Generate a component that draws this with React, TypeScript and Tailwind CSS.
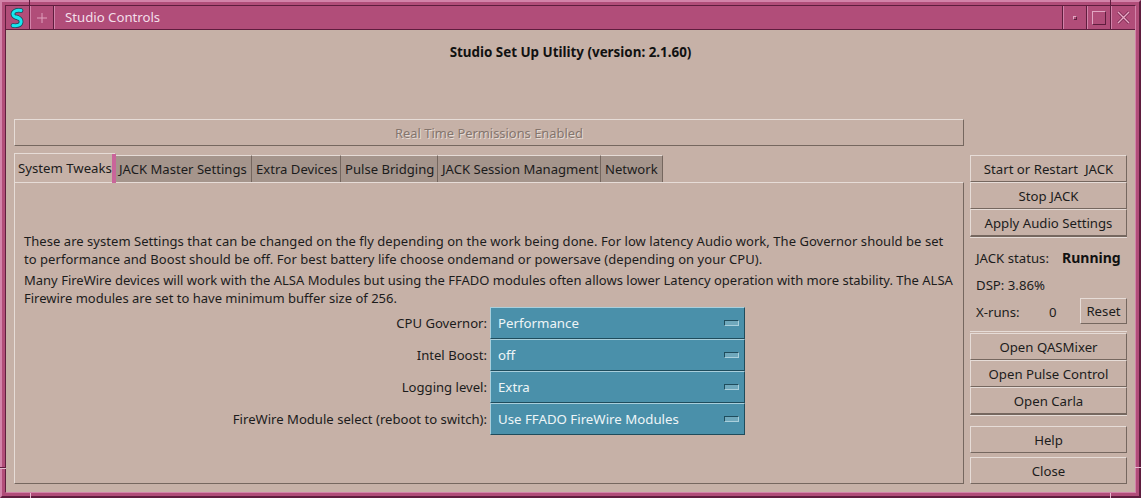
const font = "[font-family:'Noto_Sans',sans-serif]";

const Btn = ({ label, className = '' }: { label: string; className?: string }) => (
  <button
    type="button"
    className={`flex items-center justify-center whitespace-pre border border-t-[#e6dcd7] border-l-[#e6dcd7] border-r-[#75675f] border-b-[#75675f] pt-[2px] text-[13.2px] text-[#1c1c1c] ${className}`}
  >
    {label}
  </button>
);

const tabs = [
  { label: 'JACK Master Settings', width: 'w-[137px]' },
  { label: 'Extra Devices', width: 'w-[89px]' },
  { label: 'Pulse Bridging', width: 'w-[97px]' },
  { label: 'JACK Session Managment', width: 'w-[163px]' },
  { label: 'Network', width: 'w-[62px]' },
];

const combos = [
  { label: 'CPU Governor:', value: 'Performance' },
  { label: 'Intel Boost:', value: 'off' },
  { label: 'Logging level:', value: 'Extra' },
  { label: 'FireWire Module select (reboot to switch):', value: 'Use FFADO FireWire Modules' },
];

const Combo = ({ label, value }: { label: string; value: string }) => (
  <div className="flex items-center">
    <span className="w-[462px] pt-[2px] pr-[3px] text-right text-[13.1px] text-[#1c1c1c]">{label}</span>
    <div className="flex h-[32px] w-[255px] items-center justify-between border border-t-[#a9cfdc] border-l-[#a9cfdc] border-r-[#1f4c5c] border-b-[#1f4c5c] bg-[#4a90aa] pl-[7px] pr-[5px] text-[13.25px] text-[#eef5f7]">
      <span className="pt-[2px]">{value}</span>
      <span className="h-[6px] w-[15px] border border-t-[#1f4c5c] border-l-[#1f4c5c] border-r-[#a9cfdc] border-b-[#a9cfdc] bg-[#6fa8bc]" />
    </div>
  </div>
);

const App = () => {
  return (
    <div className={`relative h-[498px] w-[1141px] overflow-hidden ${font}`}>
      <div className="h-full border-2 border-t-[#d283a9] border-l-[#d283a9] border-r-[#5f1d3e] border-b-[#5f1d3e] bg-[#b14d79] p-[3px]">
        <div className="flex h-full flex-col border border-t-[#5f1d3e] border-l-[#5f1d3e] border-r-[#d283a9] border-b-[#d283a9] bg-[#c6b1a7]">
          {/* title bar */}
          <div className="flex h-[24px] shrink-0 border-b border-[#5f1d3e] bg-[#b14d79]">
            <div className="flex w-[24px] items-center justify-center border-r border-[#5f1d3e] pt-[1px] pr-[1px]">
              <svg width="14" height="20" viewBox="0 0 14 20">
                <g fill="none" strokeLinecap="round">
                  <path d="M11 2.500C6.500 1.500 2.500 3.500 3 6.500 3.500 9 6.500 9.500 8 10" stroke="#1d4a5c" strokeWidth="4.600" />
                  <path d="M6.500 9C9.500 10 11.500 12 11 14.500 10.500 17 7 18 3 17.500" stroke="#1d4a5c" strokeWidth="4.600" />
                  <path d="M11 2.500C6.500 1.500 2.500 3.500 3 6.500 3.500 9 6.500 9.500 8 10" stroke="#17e8f0" strokeWidth="3" />
                  <path d="M6.500 9C9.500 10 11.500 12 11 14.500 10.500 17 7 18 3 17.500" stroke="#17e8f0" strokeWidth="3" />
                </g>
              </svg>
            </div>
            <div className="flex w-[24px] items-center justify-center border-x border-l-[#d283a9] border-r-[#5f1d3e]">
              <svg width="10" height="10" viewBox="0 0 10 10">
                <path d="M5 0V10M0 5H10" stroke="#dfa0bd" strokeWidth="1" />
              </svg>
            </div>
            <div className="flex flex-1 items-center border-x border-l-[#d283a9] border-r-[#5f1d3e] pl-[10px] text-[13.2px] text-[#f3dfe9]">
              Studio Controls
            </div>
            <div className="flex w-[24px] items-center justify-center border-x border-l-[#d283a9] border-r-[#5f1d3e]">
              <span className="h-[4px] w-[4px] border border-t-[#e2a6c2] border-l-[#e2a6c2] border-r-[#5f1d3e] border-b-[#5f1d3e]" />
            </div>
            <div className="flex w-[24px] items-center justify-center border-x border-l-[#d283a9] border-r-[#5f1d3e]">
              <span className="h-[14px] w-[14px] border border-t-[#e2a6c2] border-l-[#e2a6c2] border-r-[#5f1d3e] border-b-[#5f1d3e]" />
            </div>
            <div className="flex w-[24px] items-center justify-center border-l border-l-[#d283a9]">
              <svg width="13" height="13" viewBox="0 0 13 13">
                <path d="M1 1L12 12M12 1L1 12" stroke="#7d2b53" strokeWidth="3" />
                <path d="M1 1L12 12M12 1L1 12" stroke="#e9a9c6" strokeWidth="1.400" />
              </svg>
            </div>
          </div>

          {/* window body */}
          <div className="flex flex-1 flex-col px-[8px]">
            <h1 className="mt-[13px] text-center text-[13.4px] leading-[18px] font-bold text-[#111]">
              Studio Set Up Utility (version: 2.1.60)
            </h1>

            <div className="mt-[58px] flex">
              <div className="w-[950px]">
                <div className="flex h-[27px] items-center justify-center border border-t-[#e6dcd7] border-l-[#e6dcd7] border-r-[#75675f] border-b-[#75675f] pt-[2px] text-[12.9px] text-[#84756d] [text-shadow:1px_1px_0_#e6dcd7]">
                  Real Time Permissions Enabled
                </div>

                <div className="mt-[7px] flex h-[29px] items-end">
                  <div className="relative z-10 -mb-px flex h-[30px] w-[101px] items-center border-t border-l border-[#e6dcd7] pl-[3px] text-[13.2px] text-[#1c1c1c]">
                    System Tweaks
                    <span className="absolute top-0 -right-px h-[29px] w-[4px] bg-[#c9659a]" />
                  </div>
                  {tabs.map(tab => (
                    <div
                      key={tab.label}
                      className={`flex h-[27px] items-center border-t border-r border-t-[#e6dcd7] border-r-[#75675f] bg-[#a5958c] pt-[2px] pl-[4px] text-[13.1px] whitespace-nowrap text-[#1c1c1c] ${tab.width}`}
                    >
                      {tab.label}
                    </div>
                  ))}
                </div>

                <div className="h-[302px] border border-t-[#e6dcd7] border-l-[#e6dcd7] border-r-[#75675f] border-b-[#75675f] pt-[49px]">
                  <p className="pl-[9px] text-[13px] leading-[18px] tracking-[0.045px] whitespace-nowrap text-[#1c1c1c]">
                    These are system Settings that can be changed on the fly depending on the work being done. For low latency Audio work, The Governor should be set
                    <br />
                    to performance and Boost should be off. For best battery life choose ondemand or powersave (depending on your CPU).
                  </p>
                  <p className="mt-[3px] pl-[9px] text-[13px] leading-[18px] whitespace-nowrap text-[#1c1c1c]">
                    Many FireWire devices will work with the ALSA Modules but using the FFADO modules often allows lower Latency operation with more stability. The ALSA
                    <br />
                    Firewire modules are set to have minimum buffer size of 256.
                  </p>
                  <div className="pl-[13px]">
                    {combos.map(combo => (
                      <Combo key={combo.label} label={combo.label} value={combo.value} />
                    ))}
                  </div>
                </div>
              </div>

              <div className="ml-[6px] flex w-[157px] flex-col pt-[36px]">
                <Btn label="Start or Restart  JACK" className="h-[27px]" />
                <Btn label="Stop JACK" className="h-[27px]" />
                <Btn label="Apply Audio Settings" className="h-[28px] border-b-2" />
                <div className="h-px bg-[#e6dcd7]" />

                <div className="mt-[12px] flex h-[18px] items-center pl-[6px] text-[13.2px] text-[#1c1c1c]">
                  <span className="w-[86px]">JACK status:</span>
                  <span className="mb-[4px] text-[14px] font-bold text-[#111]">Running</span>
                </div>
                <div className="mt-[9px] flex h-[18px] items-center pl-[6px] text-[13.2px] text-[#1c1c1c]">DSP: 3.86%</div>
                <div className="mt-[3px] flex items-center pl-[6px] text-[13.2px] text-[#1c1c1c]">
                  <span className="w-[73px] pt-[4px]">X-runs:</span>
                  <span className="w-[31px] pt-[4px]">0</span>
                  <Btn label="Reset" className="h-[26px] w-[47px]" />
                </div>

                <div className="mt-[7px] h-px bg-[#e6dcd7]" />
                <Btn label="Open QASMixer" className="mt-px h-[27px]" />
                <Btn label="Open Pulse Control" className="h-[27px]" />
                <Btn label="Open Carla" className="h-[28px] border-b-2" />
                <div className="h-px bg-[#e6dcd7]" />

                <Btn label="Help" className="mt-[10px] h-[27px]" />
                <Btn label="Close" className="mt-[4px] h-[27px]" />
              </div>
            </div>
          </div>
        </div>
      </div>

      {/* frame grip ticks */}
      <span className="absolute top-0 left-[29px] h-[6px] w-px bg-[#5f1d3e]" />
      <span className="absolute top-0 left-[1110px] h-[6px] w-px bg-[#5f1d3e]" />
      <span className="absolute bottom-0 left-[30px] h-[5px] w-px bg-[#e6b9cf]" />
      <span className="absolute bottom-0 left-[1110px] h-[5px] w-px bg-[#e6b9cf]" />
      <span className="absolute top-[467px] left-0 h-px w-[6px] bg-[#5f1d3e]" />
      <span className="absolute top-[468px] left-0 h-px w-[6px] bg-[#e6b9cf]" />
      <span className="absolute top-[467px] right-0 h-px w-[6px] bg-[#e6b9cf]" />
    </div>
  );
};

export default App;
